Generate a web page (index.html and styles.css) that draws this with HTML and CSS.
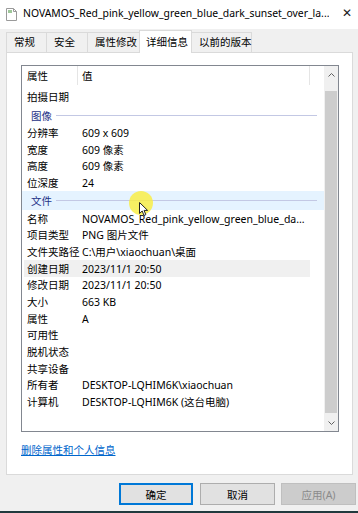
FILE: index.html
```html
<!DOCTYPE html>
<html lang="zh-CN">
<head>
<meta charset="utf-8">
<title>属性</title>
<link rel="stylesheet" href="styles.css">
</head>
<body>
<div class="window">
  <div class="titlebar">
    <svg class="ficon" viewBox="0 0 11 13" width="11" height="13">
      <path d="M0.5 0.5 H7.5 L10.5 3.5 V12.5 H0.5 Z" fill="#fff" stroke="#9a9a9a"/>
      <path d="M7.5 0.5 V3.5 H10.5" fill="none" stroke="#9a9a9a"/>
      <rect x="2" y="2" width="4" height="3" fill="#9fc79a"/>
    </svg>
    <span class="title">NOVAMOS_Red_pink_yellow_green_blue_dark_sunset_over_la...</span>
    <span class="wctl">✕</span>
  </div>

  <div class="tabs">
    <div class="tab t1">常规</div>
    <div class="tab t2">安全</div>
    <div class="tab t3">属性修改</div>
    <div class="tab t4 active">详细信息</div>
    <div class="tab t5">以前的版本</div>
  </div>

  <div class="panel">
    <div class="list">
      <div class="content">
        <div class="hdr">
          <span class="k">属性</span>
          <span class="sep"></span>
          <span class="v">值</span>
          <span class="sep"></span>
        </div>
        <div class="row"><span class="k">拍摄日期</span><span class="v"></span></div>
        <div class="group">图像</div>
        <div class="row"><span class="k">分辨率</span><span class="v">609 x 609</span></div>
        <div class="row"><span class="k">宽度</span><span class="v">609 像素</span></div>
        <div class="row"><span class="k">高度</span><span class="v">609 像素</span></div>
        <div class="row"><span class="k">位深度</span><span class="v">24</span></div>
        <div class="group sel">文件</div>
        <div class="row"><span class="k">名称</span><span class="v">NOVAMOS_Red_pink_yellow_green_blue_da...</span></div>
        <div class="row"><span class="k">项目类型</span><span class="v">PNG 图片文件</span></div>
        <div class="row"><span class="k">文件夹路径</span><span class="v">C:\用户\xiaochuan\桌面</span></div>
        <div class="row hover"><span class="k">创建日期</span><span class="v">2023/11/1 20:50</span></div>
        <div class="row"><span class="k">修改日期</span><span class="v">2023/11/1 20:50</span></div>
        <div class="row"><span class="k">大小</span><span class="v">663 KB</span></div>
        <div class="row"><span class="k">属性</span><span class="v">A</span></div>
        <div class="row"><span class="k">可用性</span><span class="v"></span></div>
        <div class="row"><span class="k">脱机状态</span><span class="v"></span></div>
        <div class="row"><span class="k">共享设备</span><span class="v"></span></div>
        <div class="row"><span class="k">所有者</span><span class="v">DESKTOP-LQHIM6K\xiaochuan</span></div>
        <div class="row"><span class="k">计算机</span><span class="v">DESKTOP-LQHIM6K (这台电脑)</span></div>
      </div>
      <div class="sb">
        <div class="sb-btn">
          <svg viewBox="0 0 7 4" width="7" height="4"><path d="M0.5 3.5 L3.5 0.5 L6.5 3.5" fill="none" stroke="#606060"/></svg>
        </div>
        <div class="sb-gap"></div>
        <div class="thumb"></div>
        <div class="sb-fill"></div>
        <div class="sb-btn">
          <svg viewBox="0 0 7 4" width="7" height="4"><path d="M0.5 0.5 L3.5 3.5 L6.5 0.5" fill="none" stroke="#606060"/></svg>
        </div>
      </div>
    </div>
    <a class="link">删除属性和个人信息</a>
  </div>

  <div class="buttons">
    <button class="btn default">确定</button>
    <button class="btn cancel">取消</button>
    <button class="btn disabled">应用(A)</button>
  </div>
  <div class="bottomline"></div>

  <div class="mouse-hl"></div>
  <svg class="cursor" viewBox="0 0 10 15" width="10" height="15">
    <path d="M0.5 0.5 L0.5 11.5 L3.2 9 L5 13.5 L6.8 12.7 L5.1 8.4 L8.6 8.4 Z" fill="#fff" stroke="#222" stroke-width="1" stroke-linejoin="round"/>
  </svg>
</div>
</body>
</html>
```

FILE: styles.css
```css
* { box-sizing: border-box; }
html, body { margin: 0; padding: 0; }
body {
  width: 358px;
  height: 513px;
  background: #f0f0f0;
  font-family: "Noto Sans", "Noto Sans CJK SC", sans-serif;
  font-size: 10.5px;
  color: #000;
  overflow: hidden;
}
.window {
  position: relative;
  width: 358px;
  height: 513px;
  display: flex;
  flex-direction: column;
}
.titlebar {
  height: 29px;
  flex: none;
  background: #fff;
  display: flex;
  align-items: center;
  padding-left: 6px;
}
.ficon { flex: none; margin-right: 6px; margin-top: -1px; }
.title {
  flex: 0 1 auto;
  min-width: 0;
  font-size: 10.4px;
  white-space: nowrap;
  overflow: hidden;
  margin-top: -3px;
}
.wctl {
  flex: none;
  margin: -4px 6px 0 auto;
  font-family: "DejaVu Sans", sans-serif;
  font-size: 12px;
  line-height: 14px;
  color: #1a1a1a;
}

.tabs {
  height: 23px;
  flex: none;
  display: flex;
  align-items: flex-end;
  padding-left: 6px;
  position: relative;
  z-index: 1;
}
.tab {
  height: 20px;
  border: 1px solid #dadada;
  border-bottom: none;
  border-right: none;
  background: #f0f0f0;
  padding: 2px 0 0 7px;
  line-height: 15px;
  white-space: nowrap;
}
.t1 { width: 40px; padding-left: 7px; }
.t2 { width: 41px; }
.t3 { width: 52px; }
.t4 { width: 53px; }
.t5 { width: 60px; border-right: 1px solid #dadada; }
.tab.active {
  height: 23px;
  margin-bottom: -1px;
  background: #fff;
  border-right: 1px solid #dadada;
  padding-top: 4px;
  padding-left: 6px;
}
.tab.active + .tab { border-left: none; }

.panel {
  flex: none;
  margin-left: 6px;
  width: 347px;
  height: 423px;
  background: #fff;
  border: 1px solid #dadada;
  padding: 12px 0 0 14px;
}
.list {
  width: 318px;
  height: 367px;
  border: 1px solid #828790;
  display: flex;
}
.content {
  width: 302px;
  flex: none;
}
.hdr {
  height: 23px;
  display: flex;
  align-items: flex-start;
}
.hdr .k { width: 55px; padding-left: 5px; line-height: 20px; }
.hdr .v { width: 231px; padding-left: 4px; line-height: 20px; }
.hdr .sep { width: 1px; height: 19px; background: #e5e5e5; }

.row {
  height: 16.67px;
  display: flex;
  align-items: center;
  white-space: nowrap;
  line-height: 16px;
}
.row .k { width: 55px; flex: none; padding-left: 5px; }
.row .v { padding-left: 5px; }
.row.hover {
  background: linear-gradient(to right, transparent 2px, #f0f0f0 2px, #f0f0f0 288px, transparent 288px);
}
.group {
  height: 19px;
  display: flex;
  align-items: center;
  padding-left: 9px;
  color: #1e3287;
}
.group::after {
  content: "";
  flex: 1;
  height: 1px;
  background: #c3c8e4;
  margin: 0 7px 0 4px;
}
.group.sel { background: #e5f3ff; }

.sb {
  width: 14px;
  flex: none;
  background: #f0f0f0;
  display: flex;
  flex-direction: column;
}
.sb-btn {
  height: 17px;
  flex: none;
  display: flex;
  align-items: center;
  justify-content: center;
}
.sb-gap { height: 8px; flex: none; }
.thumb { height: 322px; flex: none; margin: 0 1px; background: #cdcdcd; }
.sb-fill { flex: 1; }

.link {
  display: inline-block;
  margin-top: 10px;
  line-height: 16px;
  color: #0066cc;
  text-decoration: underline;
}

.buttons {
  flex: none;
  display: flex;
  margin-top: 8px;
  padding-left: 119px;
}
.btn {
  font: inherit;
  height: 22px;
  width: 75px;
  background: #e1e1e1;
  border: 1px solid #adadad;
  padding: 0;
  color: #000;
}
.btn.default { width: 74px; border: 2px solid #0078d7; }
.btn.cancel { margin-left: 7px; }
.btn.disabled { margin-left: 6px; background: #cccccc; border-color: #bfbfbf; color: #8a8a8a; }

.bottomline {
  margin-top: auto;
  height: 2px;
  background: #213a3e;
}

.mouse-hl {
  position: absolute;
  left: 129px;
  top: 191px;
  width: 24px;
  height: 24px;
  border-radius: 50%;
  background: rgba(250, 238, 60, 0.8);
}
.cursor {
  position: absolute;
  left: 139px;
  top: 202px;
}
```
